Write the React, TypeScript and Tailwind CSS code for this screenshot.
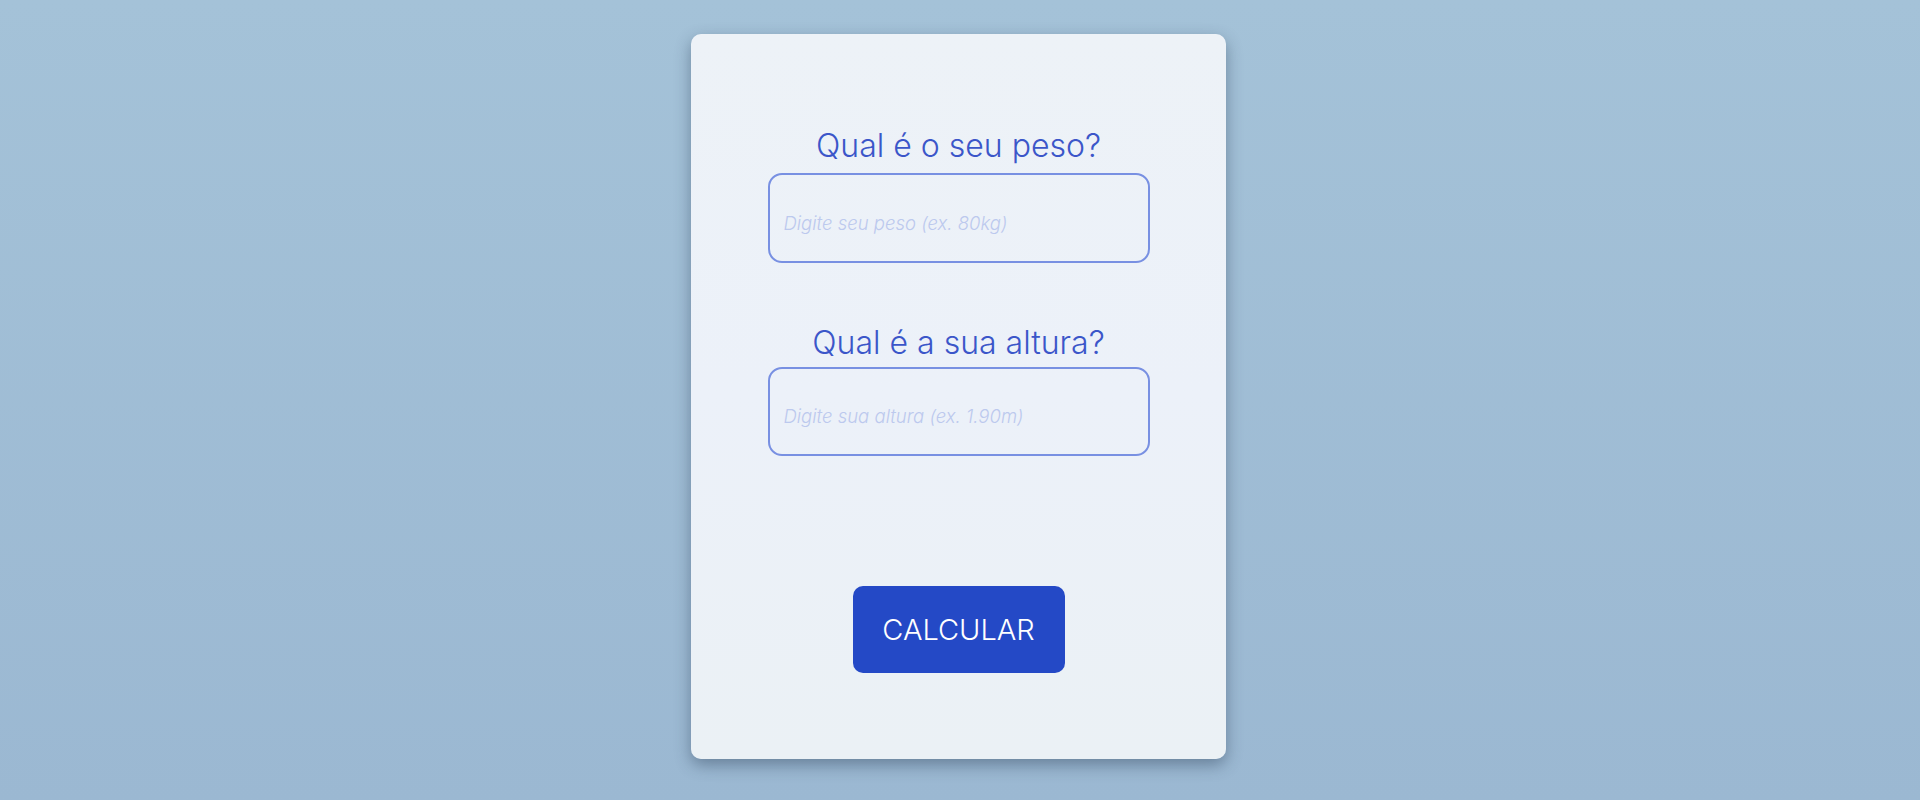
import React from 'react';

export default function App() {
  return (
    <div className="min-h-screen w-full flex items-center justify-center bg-gradient-to-b from-[#a4c2d8] to-[#9bb8d2] font-['Inter','Liberation_Sans',sans-serif]">
      <div className="w-[535px] h-[725px] -mt-[7px] mr-[3px] rounded-[10px] bg-gradient-to-b from-[#edf2f7] via-[#ecf1f9] to-[#ebf1f5] shadow-[0_6px_16px_rgba(40,60,85,0.45)] flex flex-col items-center pt-[88px]">
        <label className="text-[32px] leading-[48px] font-light text-[#3b56c9]">Qual é o seu peso?</label>
        <input
          type="text"
          placeholder="Digite seu peso (ex. 80kg)"
          className="mt-[3px] w-[382px] h-[90px] rounded-[14px] border-2 border-[#7890e2] bg-transparent pl-[14px] pr-4 pt-[9px] text-[18.5px] font-light italic text-[#3b56c9] placeholder:text-[#bcc9ee] outline-none"
        />
        <label className="mt-[56px] text-[32px] leading-[48px] font-light text-[#3b56c9]">Qual é a sua altura?</label>
        <input
          type="text"
          placeholder="Digite sua altura (ex. 1.90m)"
          className="w-[382px] h-[89px] rounded-[14px] border-2 border-[#7890e2] bg-transparent pl-[14px] pr-4 pt-[9px] text-[18.5px] font-light italic text-[#3b56c9] placeholder:text-[#bcc9ee] outline-none"
        />
        <button className="mt-[130px] w-[212px] h-[87px] rounded-[10px] bg-[#2449c6] text-white text-[29px] font-light">
          CALCULAR
        </button>
      </div>
    </div>
  );
}
